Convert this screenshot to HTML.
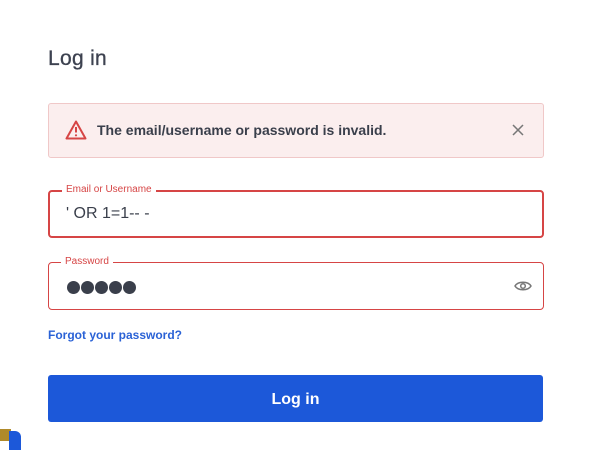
<!DOCTYPE html>
<html><head><style>
body{margin:0;width:594px;height:467px;background:#fff;font-family:"Liberation Sans",sans-serif;position:relative;overflow:hidden;color:#3a3f4b}
.abs{position:absolute}
h1{position:absolute;left:48px;top:47px;margin:0;font-size:21px;font-weight:normal;color:#3d4250;letter-spacing:0.3px;-webkit-text-stroke:0.3px #3d4250}
.alert{left:48px;top:103px;width:494px;height:53px;background:#fbeeee;border:1px solid #f0c8c8;border-radius:3px}
.alert .t{position:absolute;left:48px;top:18px;font-size:14px;font-weight:bold;color:#3a3f4b}
.field{left:48px;width:492px;border:2px solid #d64545;border-radius:4px}
.lbl{position:absolute;left:12px;top:-8px;background:#fff;padding:0 4px;font-size:10px;color:#d64545}
.btn{left:48px;top:375px;width:495px;height:47px;background:#1c58d9;border-radius:3px;color:#fff;font-size:16px;text-align:center;line-height:49px;font-weight:bold}
.dot{display:inline-block;width:13px;height:13px;border-radius:50%;background:#3a3f4b;margin-right:1px}
</style></head><body>
<h1>Log in</h1>
<div class="abs alert">
<svg class="abs" style="left:16px;top:16px" width="22" height="20" viewBox="0 0 22 20"><path d="M11 1.5L1.5 18.5h19z" fill="none" stroke="#d64545" stroke-width="2" stroke-linejoin="round"/><path d="M11 7v5.5" stroke="#d64545" stroke-width="2"/><circle cx="11" cy="15.3" r="1.1" fill="#d64545"/></svg>
<div class="t">The email/username or password is invalid.</div>
<svg class="abs" style="left:463px;top:20px" width="12" height="12" viewBox="0 0 12 12"><path d="M1 1L11 11M11 1L1 11" stroke="#777" stroke-width="1.5"/></svg>
</div>
<div class="abs field" style="top:190px;height:44px"><div class="lbl">Email or Username</div>
<div class="abs" style="left:16px;top:13px;font-size:16px;color:#3a3f4b">' OR 1=1-- -</div></div>
<div class="abs field" style="top:262px;height:46px;border-width:1px;width:494px"><div class="lbl" style="top:-7px">Password</div>
<div class="abs" style="left:18px;top:18px;line-height:0"><span class="dot"></span><span class="dot"></span><span class="dot"></span><span class="dot"></span><span class="dot"></span></div>
<svg class="abs" style="left:465px;top:17px" width="18" height="12" viewBox="0 0 18 12"><path d="M1 6C4 1 14 1 17 6C14 11 4 11 1 6Z" fill="none" stroke="#777" stroke-width="1.5"/><circle cx="9" cy="6" r="2.3" fill="none" stroke="#777" stroke-width="1.5"/></svg></div>
<div class="abs" style="left:48px;top:328px;font-size:12px;font-weight:bold;color:#2a62d6">Forgot your password?</div>
<div class="abs btn">Log in</div>
<div class="abs" style="left:0;top:429px;width:11px;height:12px;background:#b08a2a"></div>
<div class="abs" style="left:9px;top:431px;width:12px;height:19px;background:#1c58d9;border-radius:0 6px 0 0"></div>
</body></html>
